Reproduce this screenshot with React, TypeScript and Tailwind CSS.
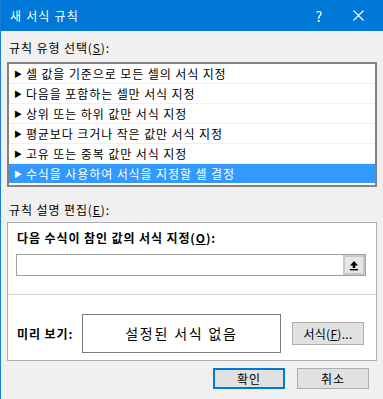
const font = { fontFamily: '"Noto Sans CJK KR", "Noto Sans", sans-serif' };

const rules = [
  '셀 값을 기준으로 모든 셀의 서식 지정',
  '다음을 포함하는 셀만 서식 지정',
  '상위 또는 하위 값만 서식 지정',
  '평균보다 크거나 작은 값만 서식 지정',
  '고유 또는 중복 값만 서식 지정',
  '수식을 사용하여 서식을 지정할 셀 결정',
];

const UpArrow = () => (
  <svg width="10" height="11" viewBox="0 0 10 11">
    <path d="M5 1 L9 5.5 L6.3 5.5 L6.3 8 L3.7 8 L3.7 5.5 L1 5.5 Z" fill="#000" />
    <rect x="1" y="9" width="8" height="1.4" fill="#000" />
  </svg>
);

export default function App() {
  return (
    <div
      className="flex h-[399px] w-[383px] flex-col border-l border-[#1a7fd4] bg-[#f0f0f0] text-[12px] tracking-[0.9px] text-black"
      style={font}
    >
      {/* title bar */}
      <div className="flex h-[31px] shrink-0 items-center bg-[#0078d7] pl-[9px] text-white">
        <span className="text-[12px] leading-none tracking-[1.2px]">새 서식 규칙</span>
        <span className="ml-auto mr-[30px] text-[14px] leading-none">?</span>
        <svg width="11" height="11" viewBox="0 0 11 11" className="mr-[19px]">
          <path d="M0.5 0.5 L10.5 10.5 M10.5 0.5 L0.5 10.5" stroke="#fff" strokeWidth="1.1" />
        </svg>
      </div>

      <div className="flex flex-col pl-[6px]">
        <div className="mt-[9px] h-[16px] pl-[2px] leading-[16px]">
          규칙 유형 선택(<span className="underline">S</span>):
        </div>

        {/* rule list */}
        <div className="mt-[6px] h-[125px] w-[370px] border-2 border-[#828282] bg-white">
          {rules.map((r, i) => {
            const sel = i === rules.length - 1;
            return (
              <div
                key={r}
                className={`flex h-[20px] items-center border-b pl-[5px] ${
                  sel ? 'border-white bg-[#3399ff] text-white' : 'border-[#f0f0f0]'
                }`}
              >
                <span className="mr-[3px] text-[8px] leading-none">▶</span>
                <span className="leading-[20px]">{r}</span>
              </div>
            );
          })}
        </div>

        <div className="mt-[15px] h-[16px] pl-[2px] leading-[16px]">
          규칙 설명 편집(<span className="underline">E</span>):
        </div>

        {/* description panel */}
        <div className="mt-[4px] flex h-[139px] w-[370px] flex-col border border-[#adadad] bg-white">
          <div className="mt-[7px] h-[16px] pl-[9px] font-bold leading-[16px]">
            다음 수식이 참인 값의 서식 지정(<span className="underline">O</span>):
          </div>
          <div className="ml-[8px] mt-[8px] flex h-[22px] w-[350px] border border-[#a0a0a0] bg-white">
            <div className="flex-1" />
            <div className="flex w-[22px] items-center justify-center border-2 border-[#c8c8c8] bg-[#e6e6e6]">
              <UpArrow />
            </div>
          </div>
          <div className="mt-[18px] h-px w-full bg-[#d4d4d4]" />
          <div className="mt-[19px] flex items-center pl-[9px]">
            <span className="w-[65px] font-bold">미리 보기:</span>
            <div className="flex h-[39px] w-[199px] items-center justify-center border border-[#7a7a7a] bg-white text-[14px] tracking-[1.8px]">
              설정된 서식 없음
            </div>
            <button className="ml-[11px] flex h-[23px] w-[72px] items-center justify-center border border-[#adadad] bg-[#e1e1e1] text-[12px] tracking-[0.3px]">
              서식(<span className="underline">F</span>)...
            </button>
          </div>
        </div>

        {/* footer buttons */}
        <div className="mt-[7px] flex w-[370px] justify-end gap-[12px] pr-[8px]">
          <button className="flex h-[21px] w-[72px] items-center justify-center border-2 border-[#0078d7] bg-[#e1e1e1] text-[12px] tracking-[1px]">
            확인
          </button>
          <button className="flex h-[21px] w-[72px] items-center justify-center border border-[#adadad] bg-[#e1e1e1] text-[12px] tracking-[1px]">
            취소
          </button>
        </div>
      </div>
    </div>
  );
}
